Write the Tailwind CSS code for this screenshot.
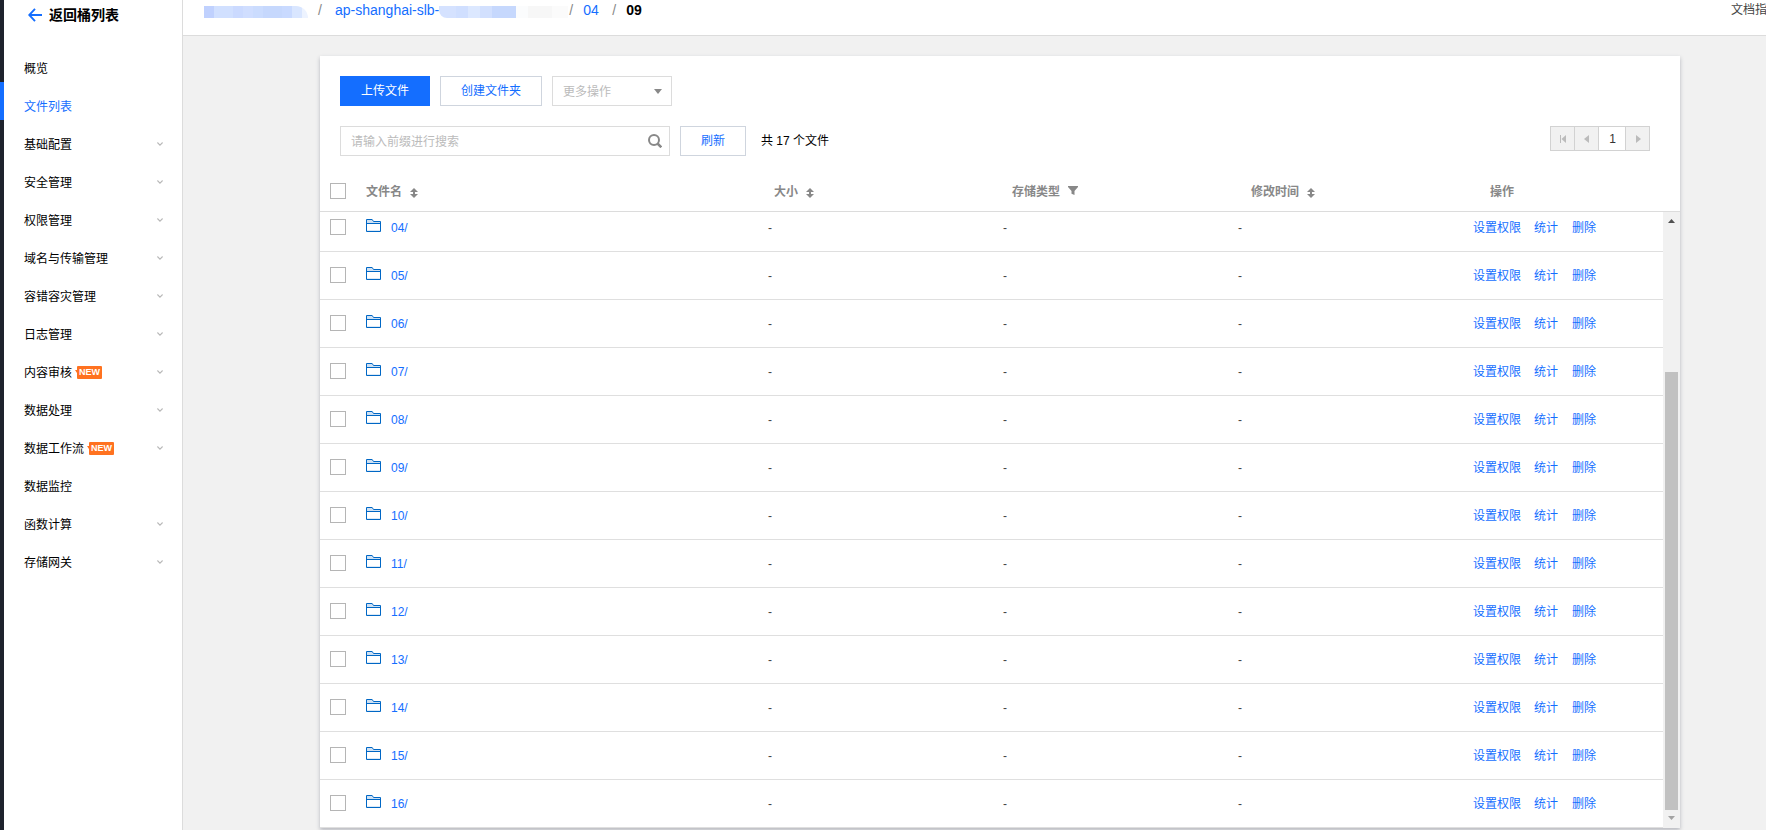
<!DOCTYPE html>
<html lang="zh-CN">
<head>
<meta charset="utf-8">
<title>文件列表</title>
<script src="https://cdn.jsdelivr.net/npm/@tailwindcss/browser@4"></script>
</head>
<body class="h-[830px] w-[1766px] overflow-hidden bg-[#f1f1f1] font-['Liberation_Sans','Noto_Sans_CJK_SC',sans-serif] text-xs text-black">
<svg class="hidden">
  <symbol id="chev" viewBox="0 0 6 4"><path d="M.4 .5 3 3.1 5.600 .5" fill="none" stroke="#b8b8b8" stroke-width="1.1"/></symbol>
  <symbol id="sort" viewBox="0 0 8 10"><path d="M4 0 8 4H5v2H8L4 10 0 6H3V4H0z" fill="#888"/></symbol>
  <symbol id="folder" viewBox="0 0 15 13"><path d="M.5 .5H6L7.500 2.500H14.500V4.500H.5z" fill="#cfe1f3"/><path d="M1 11h13v1H1z" fill="#dbe9f6"/><path d="M.5 .5H6.200L7.500 2.500H14.500V12.500H.5zM.5 4.500H14.500" fill="none" stroke="#0067c5"/></symbol>
</svg>
<div class="flex h-full">
  <div class="w-1 shrink-0 bg-[#1e222d] pt-[82px]"><div class="h-[38px] bg-[#146eff]"></div></div>
  <aside class="w-[179px] shrink-0 border-r border-[#dcdcdc] bg-white">
    <div class="flex h-[50px] items-start gap-[7px] pt-1 pl-6 text-sm font-bold">
      <svg class="mt-1 h-[14px] w-[14px]" viewBox="0 0 14 14"><path d="M7 .8 1.200 7 7 13.200M1 7H14" fill="none" stroke="#146eff" stroke-width="1.900"/></svg>
      <span class="leading-[22px]">返回桶列表</span>
    </div>
    <nav id="nav"></nav>
  </aside>
  <main class="min-w-0 flex-1">
    <header class="flex h-9 items-start justify-between overflow-hidden border-b border-[#dcdcdc] bg-white">
      <div class="flex h-5 items-center pl-[21px] text-sm leading-5 text-[#146eff]">
        <div class="mt-1 flex h-3 w-[104px] overflow-hidden rounded-tr-xl">
          <i class="w-3 bg-[#c0d1fe]"></i><i class="w-6 bg-[#d1e0ff]"></i><i class="w-3 bg-[#cbdaff]"></i><i class="w-3 bg-[#d0deff]"></i><i class="w-3 bg-[#cbdcfe]"></i><i class="w-6 bg-[#c6d8fd]"></i><i class="w-3 bg-[#c9daff]"></i><i class="w-3 bg-[#d9e6ff]"></i><i class="w-2 bg-[#edf3ff]"></i>
        </div>
        <span class="ml-[10px] w-[17px] text-[#888]">/</span>
        <span>ap-shanghai-slb-</span>
        <div class="mt-1 flex h-3 w-[130px] overflow-hidden rounded-bl-lg">
          <i class="w-[17px] bg-[#d5e2ff]"></i><i class="w-3 bg-[#d0dfff]"></i><i class="w-3 bg-[#dce8ff]"></i><i class="w-3 bg-[#d2e0fe]"></i><i class="w-6 bg-[#c6d8fd]"></i><i class="w-3 bg-[#fbfcfd]"></i><i class="w-6 bg-[#f7f7f7]"></i><i class="w-4 bg-[#fbfbfb]"></i>
        </div>
        <span class="w-[14px] text-[#888]">/</span><span class="w-[29px]">04</span><span class="w-[14px] text-[#888]">/</span><b class="text-black">09</b>
      </div>
      <div class="w-[35px] overflow-hidden text-xs leading-[21px] whitespace-nowrap text-[#444]">文档指南</div>
    </header>
    <section class="mt-5 ml-[137px] flex h-[772px] w-[1360px] flex-col bg-white shadow-[0_2px_4px_rgba(54,58,80,0.32)]">
      <div class="flex gap-[10px] pt-5 pl-5 leading-7">
        <button class="h-[30px] w-[90px] bg-[#146eff] text-white">上传文件</button>
        <button class="h-[30px] w-[102px] border border-[#cfd5de] text-[#146eff]">创建文件夹</button>
        <div class="flex h-[30px] w-[120px] items-center justify-between border border-[#dcdcdc] px-[10px] text-[#bbb]"><span class="pt-0.5">更多操作</span><svg class="mr-[-1px] h-[5px] w-2" viewBox="0 0 8 5"><path d="M0 0h8L4 5z" fill="#888"/></svg></div>
      </div>
      <div class="flex h-[50px] pt-5 pr-[30px] pl-5">
        <div class="flex h-[30px] w-[330px] items-center justify-between border border-[#dcdcdc] pr-[7px] pl-[10px] text-[#bbb]"><span class="pt-px">请输入前缀进行搜索</span><svg class="h-[14px] w-[14px]" viewBox="0 0 14 14"><circle cx="6" cy="6" r="5" fill="none" stroke="#888" stroke-width="2"/><path d="M9.500 9.500 13.300 13.300" stroke="#888" stroke-width="2.500"/></svg></div>
        <button class="ml-[10px] h-[30px] w-[66px] border border-[#cfd5de] text-[#146eff]">刷新</button>
        <span class="ml-[15px] leading-[30px]">共 17 个文件</span>
        <div class="ml-auto flex h-[25px] w-[100px] border border-[#d2d2d2] bg-[#f1f1f1]">
          <div class="flex w-6 items-center justify-center border-r border-[#d2d2d2]"><svg class="h-2 w-[6px]" viewBox="0 0 6 8"><path d="M0 0h1v8H0zM6 0v8L1.500 4z" fill="#bbb"/></svg></div>
          <div class="flex w-6 items-center justify-center border-r border-[#d2d2d2]"><svg class="h-2 w-[5px]" viewBox="0 0 5 8"><path d="M5 0v8L0 4z" fill="#bbb"/></svg></div>
          <div class="flex w-[27px] items-center justify-center border-r border-[#d2d2d2] bg-white pl-px text-[#333]">1</div>
          <div class="flex flex-1 items-center justify-center"><svg class="ml-px h-2 w-[5px]" viewBox="0 0 5 8"><path d="M0 0v8L5 4z" fill="#bbb"/></svg></div>
        </div>
      </div>
      <div class="flex h-14 shrink-0 items-center border-b border-[#dcdcdc] pt-[17px] pl-[10px] font-bold text-[#888]">
        <i class="mt-[-3px] mr-5 h-4 w-4 border border-[#b5b5b5]"></i>
        <div class="flex w-[408px] items-center gap-2">文件名<svg class="mt-px h-[10px] w-2"><use href="#sort"/></svg></div>
        <div class="flex w-[238px] items-center gap-2">大小<svg class="mt-px h-[10px] w-2"><use href="#sort"/></svg></div>
        <div class="flex w-[239px] items-center gap-2">存储类型<svg class="mt-[-4px] h-[9px] w-[10px]" viewBox="0 0 10 9"><path d="M0 0h10v1L6.500 5v4l-3-1.300V5L0 1z" fill="#888"/></svg></div>
        <div class="flex w-[239px] items-center gap-2">修改时间<svg class="mt-px h-[10px] w-2"><use href="#sort"/></svg></div>
        <div>操作</div>
      </div>
      <div class="flex h-[616px] overflow-hidden">
        <div id="rows" class="flex w-[1343px] flex-col justify-end"></div>
        <div class="flex w-[17px] flex-col items-center bg-[#f1f1f1]">
          <svg class="mt-[7px] h-1 w-[7px]" viewBox="0 0 7 4"><path d="M0 4h7L3.500 0z" fill="#505050"/></svg>
          <div class="mt-[149px] h-[438px] w-[13px] bg-[#c1c1c1]"></div>
          <svg class="mt-[6px] h-1 w-[7px]" viewBox="0 0 7 4"><path d="M0 0h7L3.500 4z" fill="#a3a3a3"/></svg>
        </div>
      </div>
    </section>
  </main>
</div>
<script>
const items = [['概览',0],['文件列表',0],['基础配置',1],['安全管理',1],['权限管理',1],['域名与传输管理',1],['容错容灾管理',1],['日志管理',1],['内容审核',1,1],['数据处理',1],['数据工作流',1,1],['数据监控',0],['函数计算',1],['存储网关',1]];
document.getElementById('nav').innerHTML = items.map(([t, c, n], i) =>
  `<div class="flex h-[38px] items-center pr-[19px] pl-5 ${i === 1 ? 'text-[#146eff]' : ''}">${t}${n ? '<span class="relative -mt-px ml-[5px] h-[13px] w-[25px] rounded-[1px] bg-[#ff7220] text-center text-[9px] leading-[13px] font-bold text-white"><i class="absolute top-1 -left-[2px] h-0 w-0 border-t-[3px] border-l-[2px] border-t-[#ff7220] border-l-transparent"></i>NEW</span>' : ''}${c ? '<svg class="ml-auto mt-[-2px] h-1 w-[6px]"><use href="#chev"/></svg>' : ''}</div>`).join('');
document.getElementById('rows').innerHTML = ['04','05','06','07','08','09','10','11','12','13','14','15','16'].map(n =>
  `<div class="flex h-12 shrink-0 items-center border-b border-[#dfdfdf] pl-[10px] text-[#444]">
    <i class="mt-[-1px] mr-5 h-4 w-4 border border-[#b5b5b5]"></i>
    <svg class="mt-[-4px] mr-[10px] h-[13px] w-[15px]"><use href="#folder"/></svg>
    <span class="w-[377px] pt-px text-[#146eff]">${n}/</span><span class="w-[235px] pt-px">-</span><span class="w-[235px] pt-px">-</span><span class="w-[235px] pt-px">-</span>
    <span class="w-[61px] text-[#146eff]">设置权限</span><span class="w-[38px] text-[#146eff]">统计</span><span class="text-[#146eff]">删除</span>
  </div>`).join('');
</script>
</body>
</html>
